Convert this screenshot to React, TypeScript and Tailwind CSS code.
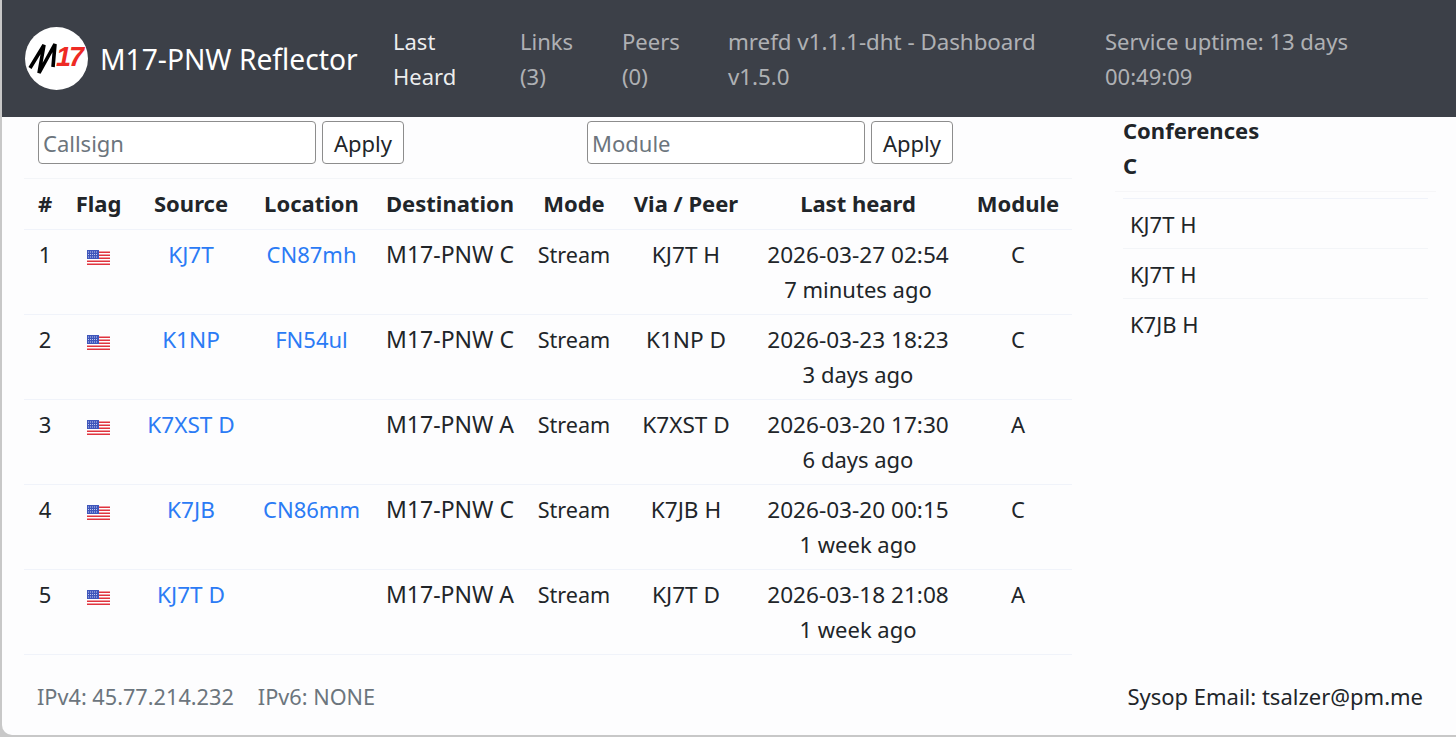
const rows = [
  ["1", "KJ7T", "CN87mh", "M17-PNW C", "KJ7T H", "2026-03-27 02:54", "7 minutes ago", "C"],
  ["2", "K1NP", "FN54ul", "M17-PNW C", "K1NP D", "2026-03-23 18:23", "3 days ago", "C"],
  ["3", "K7XST D", "", "M17-PNW A", "K7XST D", "2026-03-20 17:30", "6 days ago", "A"],
  ["4", "K7JB", "CN86mm", "M17-PNW C", "K7JB H", "2026-03-20 00:15", "1 week ago", "C"],
  ["5", "KJ7T D", "", "M17-PNW A", "KJ7T D", "2026-03-18 21:08", "1 week ago", "A"],
];
const heads = ["#", "Flag", "Source", "Location", "Destination", "Mode", "Via / Peer", "Last heard", "Module"];
const widths = ["w-[42px]", "w-[65px]", "w-[120px]", "w-[121px]", "w-[156px]", "w-[92px]", "w-[132px]", "w-[212px]", "w-[108px]"];

function Flag() {
  return (
    <svg width="23" height="15" viewBox="0 0 23 15" className="ml-[21px] block">
      <rect width="23" height="15" fill="#fff" />
      {[1.5, 4.5, 7.5, 10.5, 13.5].map((y) => (
        <rect key={y} y={y} width="23" height="1.5" fill="#e0343f" />
      ))}
      <rect width="12" height="9" fill="#3f56bb" />
      {[2, 4.5, 7].map((y) => (
        <line key={y} x1="1" x2="11" y1={y} y2={y} stroke="#c3cbf0" strokeWidth="1" strokeDasharray="1 1" />
      ))}
    </svg>
  );
}

function Logo() {
  return (
    <svg width="63" height="63" viewBox="0 0 63 63" className="shrink-0">
      <circle cx="31.5" cy="31.5" r="31.5" fill="#fff" />
      <polyline points="5,41 19,18 14,46 30,17 28,40" fill="none" stroke="#000" strokeWidth="3.6" />
      <text x="31" y="39" fontSize="27" fontWeight="700" fontStyle="italic" fill="#ee2a24" fontFamily="Liberation Sans, sans-serif" letterSpacing="-2">17</text>
    </svg>
  );
}

export default function App() {
  return (
    <div className="h-[737px] w-[1456px] overflow-hidden bg-[#c8c8c8] font-['Noto_Sans',sans-serif] text-[22px] leading-[35px] text-[#212529]">
      <div className="ml-[2px] h-[735px] overflow-hidden rounded-bl-[10px] bg-[#fdfdfe]">
        <header className="flex h-[117px] items-center bg-[#3c4048] pl-[23px]">
          <Logo />
          <div className="ml-[12px] w-[293px] text-[28.2px] leading-[40px] text-white">M17-PNW Reflector</div>
          <nav className="flex text-[rgba(255,255,255,0.6)]">
            <div className="w-[127px] text-[rgba(255,255,255,0.92)]">Last<br />Heard</div>
            <div className="w-[102px]">Links<br />(3)</div>
            <div className="w-[106px]">Peers<br />(0)</div>
            <div className="w-[377px] text-[22.3px]">mrefd v1.1.1-dht - Dashboard<br />v1.5.0</div>
            <div className="w-[300px]">Service uptime: 13 days<br />00:49:09</div>
          </nav>
        </header>
        <div className="flex h-[618px]">
          <main className="ml-[22px] w-[1048px]">
            <div className="flex h-[62px] items-start border-b border-[#f3f5f8] pt-[4px] pl-[14px]">
              <div className="flex w-[549px] gap-[6px]">
                <div className="flex h-[43px] w-[278px] items-center rounded-[4px] border border-[#8d8d8d] bg-white px-[4px] pt-[2px] text-[#6c757d]">Callsign</div>
                <div className="flex h-[43px] w-[82px] items-center justify-center rounded-[4px] border border-[#8d8d8d] bg-white pt-[2px]">Apply</div>
              </div>
              <div className="flex gap-[6px]">
                <div className="flex h-[43px] w-[278px] items-center rounded-[4px] border border-[#8d8d8d] bg-white px-[4px] pt-[2px] text-[#6c757d]">Module</div>
                <div className="flex h-[43px] w-[82px] items-center justify-center rounded-[4px] border border-[#8d8d8d] bg-white pt-[2px]">Apply</div>
              </div>
            </div>
            <table className="w-[1048px] table-fixed border-collapse text-center">
              <thead>
                <tr className="h-[50px] border-b border-[#f0f3fa]">
                  {heads.map((h, i) => (
                    <th key={h} className={`${widths[i]} p-0 font-bold`}>{h}</th>
                  ))}
                </tr>
              </thead>
              <tbody>
                {rows.map((r) => (
                  <tr key={r[0]} className="h-[85px] border-b border-[#f0f3fa]">
                    <td className="p-0 align-top pt-[7px]">{r[0]}</td>
                    <td className="p-0 align-top pt-[20px]"><Flag /></td>
                    <td className="p-0 align-top pt-[7px] text-[22.6px] text-[#2b7bf5]">{r[1]}</td>
                    <td className="p-0 align-top pt-[7px] text-[#2b7bf5]">{r[2]}</td>
                    <td className="p-0 align-top pt-[7px] text-[23px]">{r[3]}</td>
                    <td className="p-0 align-top pt-[7px] text-[21.6px]">Stream</td>
                    <td className="p-0 align-top pt-[7px] text-[22.6px]">{r[4]}</td>
                    <td className="p-0 align-top pt-[7px] text-[22.6px]">{r[5]}<br /><span className="text-[22px]">{r[6]}</span></td>
                    <td className="p-0 align-top pt-[7px]">{r[7]}</td>
                  </tr>
                ))}
              </tbody>
            </table>
            <div className="flex gap-[24px] pt-[24px] pl-[13px] text-[21.7px] text-[#6c757d]">
              <span>IPv4: 45.77.214.232</span>
              <span>IPv6: NONE</span>
            </div>
          </main>
          <aside className="ml-[43px] flex w-[321px] flex-col pb-[21px]">
            <div className="pl-[8px] font-bold leading-[27px]">Conferences</div>
            <div className="h-[48px] border-b border-[#f6f6f8] pl-[8px] pt-[4px] font-bold">C</div>
            <div className="mx-[8px] mt-[6px] border-t border-[#f0f3fa]">
              {["KJ7T H", "KJ7T H", "K7JB H"].map((c, i) => (
                <div key={i} className="flex h-[50px] items-center border-b border-[#f3f5f8] pl-[7px] pt-[1px] last:border-b-0">{c}</div>
              ))}
            </div>
            <div className="mt-auto whitespace-nowrap pr-[13px] text-right text-[#212529]">Sysop Email: tsalzer@pm.me</div>
          </aside>
        </div>
      </div>
    </div>
  );
}
